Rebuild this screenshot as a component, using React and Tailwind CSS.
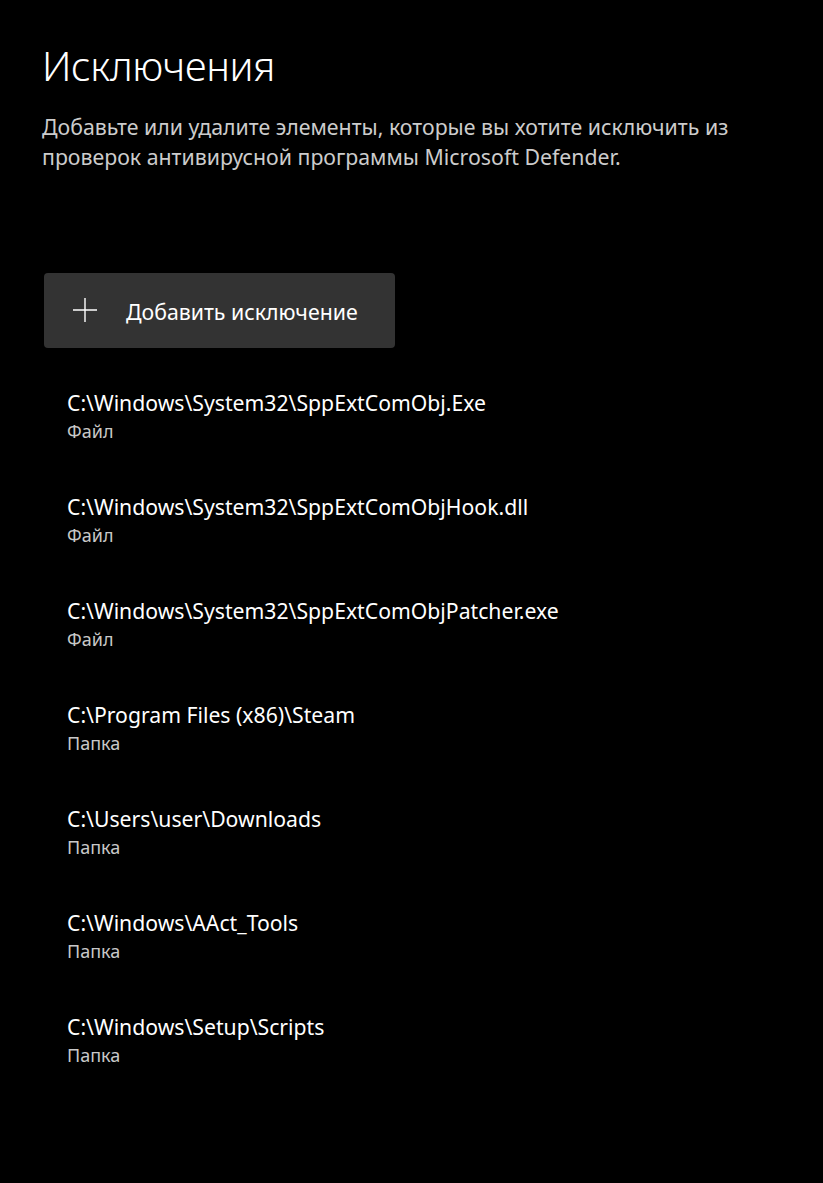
import React from "react"

const items = [
  { path: "C:\\Windows\\System32\\SppExtComObj.Exe", kind: "Файл" },
  { path: "C:\\Windows\\System32\\SppExtComObjHook.dll", kind: "Файл" },
  { path: "C:\\Windows\\System32\\SppExtComObjPatcher.exe", kind: "Файл" },
  { path: "C:\\Program Files (x86)\\Steam", kind: "Папка" },
  { path: "C:\\Users\\user\\Downloads", kind: "Папка" },
  { path: "C:\\Windows\\AAct_Tools", kind: "Папка" },
  { path: "C:\\Windows\\Setup\\Scripts", kind: "Папка" },
]

export default function App() {
  return (
    <div
      className="min-h-[1183px] w-[823px] bg-black text-white"
      style={{ fontFamily: '"Segoe UI", "Noto Sans", sans-serif' }}
    >
      <div className="pl-[42px] pt-[40px]">
        <h1 className="text-[40px] font-light leading-[52px] tracking-[-0.3px]">Исключения</h1>
        <p className="mt-[20px] text-[21.3px] leading-[30px] text-[#cccccc]">
          Добавьте или удалите элементы, которые вы хотите исключить из
          <br />
          проверок антивирусной программы Microsoft Defender.
        </p>
      </div>

      <div className="pl-[44px] pt-[101px]">
        <button className="flex h-[75px] w-[351px] items-center rounded-[4px] bg-[#333333] text-left">
          <svg width="24" height="24" viewBox="0 0 24 24" className="ml-[29px] -mt-[2px]">
            <path d="M12 0v24M0 12h24" stroke="#ffffff" strokeWidth="1.4" fill="none" />
          </svg>
          <span className="ml-[29px] mt-[3px] text-[21.3px] text-white">Добавить исключение</span>
        </button>
      </div>

      <ul className="pl-[67px] pt-[40px]">
        {items.map((it) => (
          <li key={it.path} className="flex h-[104px] flex-col">
            <span className="text-[21.2px] leading-[30px] text-white">{it.path}</span>
            <span className="text-[18px] leading-[26px] text-[#c8c8c8]">{it.kind}</span>
          </li>
        ))}
      </ul>
    </div>
  )
}
